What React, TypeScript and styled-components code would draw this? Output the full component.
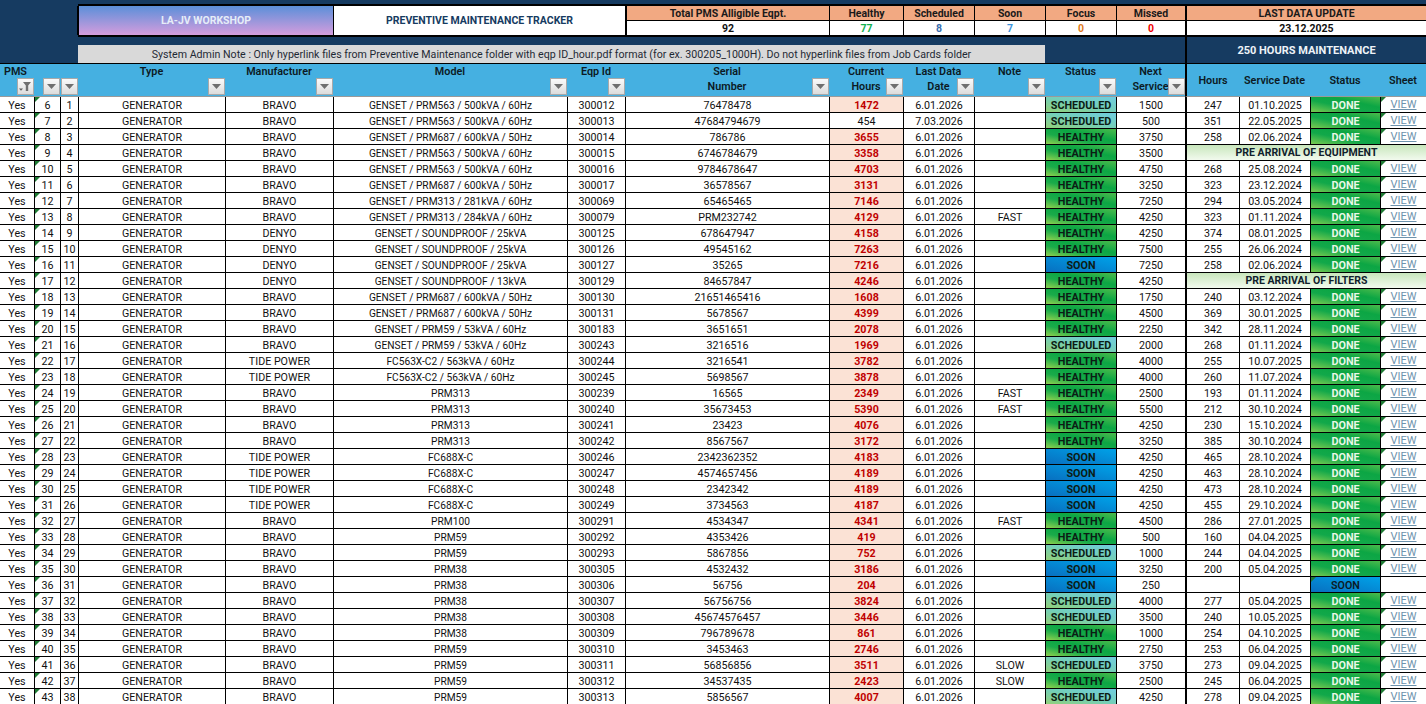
import React from "react";
import styled, { createGlobalStyle, css } from "styled-components";

const COLUMNS = "34px 26px 18px 147px 108px 234px 58px 204px 74px 71px 71px 71px 69px 54px 71px 70px 46px";

const Global = createGlobalStyle`
  html, body { margin: 0; padding: 0; height: 100%; overflow: hidden; background: #163b61; }
  #root { height: 704px; overflow: hidden; }
`;

const Page = styled.div`
  width: 1426px;
  height: 704px;
  overflow: hidden;
  background: #163b61;
  font-family: Roboto, "Liberation Sans", sans-serif;
  font-size: 10.7px;
  color: #111;
`;

const Banner = styled.div`
  display: grid;
  grid-template-columns: ${COLUMNS};
  grid-template-rows: 4px 2px 15px 14px 2px 8px 18px 1px;
`;

const Table = styled.div`
  display: grid;
  grid-template-columns: ${COLUMNS};
  grid-template-rows: 33px;
  grid-auto-rows: 16px;
`;

const Rule = styled.div<{ $row: number; $col: string }>`
  grid-column: ${(p) => p.$col};
  grid-row: ${(p) => p.$row};
  background: #000;
`;

const BannerCell = styled.div<{ $col: string; $row: string }>`
  grid-column: ${(p) => p.$col};
  grid-row: ${(p) => p.$row};
  display: flex;
  align-items: center;
  justify-content: center;
  font-weight: 700;
  font-size: 10.5px;
  white-space: nowrap;
  box-sizing: border-box;
`;

const Workshop = styled(BannerCell)`
  background: linear-gradient(#5b8fd9, #d59ddd);
  color: #e6edf8;
  border-left: 2px solid #000;
  margin-left: -1px;
`;

const Tracker = styled(BannerCell)`
  background: #fff;
  color: #163b61;
  border-left: 1px solid #000;
`;

const KpiHead = styled(BannerCell)<{ $edge?: boolean }>`
  background: #f2a982;
  border-bottom: 1px solid #000;
  border-left: ${(p) => (p.$edge ? 2 : 1)}px solid #000;
  color: #1a1a1a;
`;

const KpiValue = styled(BannerCell)<{ $color?: string; $edge?: boolean }>`
  background: #fff;
  border-left: ${(p) => (p.$edge ? 2 : 1)}px solid #000;
  color: ${(p) => p.$color ?? "#111"};
`;

const Note = styled(BannerCell)`
  background: #d9d9d9;
  color: #1f2a35;
  font-weight: 400;
  font-size: 10.63px;
`;

const HoursBanner = styled(BannerCell)`
  background: #163b61;
  border-left: 2px solid #000;
  color: #eef3f8;
  font-size: 11px;
`;

const HeadCell = styled.div<{ $centered?: boolean }>`
  position: relative;
  background: #45b0e1;
  color: #0c1a24;
  font-weight: 600;
  font-size: 10.8px;
  line-height: 15px;
  text-align: center;
  box-sizing: border-box;
  white-space: nowrap;
  border-bottom: 1px solid #9a9a9a;
  ${(p) =>
    p.$centered &&
    css`
      display: flex;
      align-items: center;
      justify-content: center;
    `}
`;

const SideLeft = styled(HeadCell)`
  border-left: 2px solid #000;
`;

const PmsLabel = styled.span`
  position: absolute;
  left: 4px;
  top: 0;
`;

const FilterBtn = styled.span`
  position: absolute;
  right: 0;
  bottom: 1px;
  width: 17px;
  height: 17px;
  box-sizing: border-box;
  background: linear-gradient(#fafafa, #dcdcdc);
  border: 1px solid #a9a9a9;
  display: flex;
  align-items: center;
  justify-content: center;
`;

const Cell = styled.div<{ $first?: boolean }>`
  position: relative;
  background: #fff;
  box-sizing: border-box;
  padding-top: 2px;
  border-bottom: 1px solid #000;
  border-left: ${(p) => (p.$first ? 0 : 1)}px solid #000;
  display: flex;
  align-items: center;
  justify-content: center;
  white-space: nowrap;
  overflow: hidden;
  line-height: 13px;
`;

const ModelCell = styled(Cell)`
  font-size: 10.2px;
`;

const SideCell = styled(Cell)`
  border-left-width: 2px;
`;

const Tick = styled.i`
  position: absolute;
  left: 0;
  top: 0;
  width: 0;
  height: 0;
  border-top: 5px solid #1e7b34;
  border-right: 5px solid transparent;
`;

const HoursCell = styled(Cell)<{ $hot: boolean }>`
  ${(p) =>
    p.$hot &&
    css`
      background: #fbe2d5;
      color: #c00000;
      font-weight: 700;
    `}
`;

const STATUS = {
  H: { label: "HEALTHY", bg: "linear-gradient(to top right, #8fd14f 0%, #1aab4a 35%, #0ca644 60%, #4dbb4c 100%)" },
  S: { label: "SCHEDULED", bg: "linear-gradient(to top right, #92d07a 0%, #74cfb8 50%, #70cde0 100%)" },
  O: { label: "SOON", bg: "linear-gradient(to top right, #0870c0 0%, #00a2e8 100%)" },
} as const;

const StatusCell = styled(Cell)<{ $bg: string }>`
  background: ${(p) => p.$bg};
  font-weight: 700;
  font-size: 10.8px;
  color: #0c1c14;
`;

const DoneCell = styled(Cell)`
  background: linear-gradient(to top right, #7acb50 0%, #12a84a 40%, #0ca644 65%, #4dbb4c 100%);
  color: #eaf7e6;
  font-weight: 700;
  font-size: 10.8px;
`;

const SoonCell = styled(Cell)`
  background: linear-gradient(to top right, #0870c0 0%, #00a2e8 100%);
  color: #0c1a24;
  font-weight: 600;
`;

const Wide = styled(Cell)`
  grid-column: 14 / 18;
  background: linear-gradient(#c8e6bc, #f2faee);
  font-weight: 700;
  font-size: 10.5px;
  border-left-width: 2px;
  padding-top: 0;
  color: #10202c;
`;

const ViewLink = styled.a`
  color: #6d93ad;
  text-decoration: underline;
  font-size: 11px;
  position: relative;
  top: -1px;
`;

const FilterIcon = ({ active }: { active?: boolean }) =>
  active ? (
    <svg width="13" height="11" viewBox="0 0 13 11">
      <path d="M4 1h8L9.2 4.5V10H6.8V4.5z" fill="#6f6f6f" />
      <path d="M0 7.5h4L2 9.8z" fill="#5f5f5f" />
    </svg>
  ) : (
    <svg width="9" height="5" viewBox="0 0 9 5">
      <path d="M0 0h9L4.5 5z" fill="#6f6f6f" />
    </svg>
  );

const G1 = "GENSET / PRM563 / 500kVA / 60Hz";
const G2 = "GENSET / PRM687 / 600kVA / 50Hz";
const SP = "GENSET / SOUNDPROOF / 25kVA";
const FC = "FC563X-C2 / 563kVA / 60Hz";

const rows: [string, string, string, string, string, string, keyof typeof STATUS, string][] = [
  ["BRAVO", G1, "300012", "76478478", "1472", "", "S", "1500"],
  ["BRAVO", G1, "300013", "47684794679", "454", "", "S", "500"],
  ["BRAVO", G2, "300014", "786786", "3655", "", "H", "3750"],
  ["BRAVO", G1, "300015", "6746784679", "3358", "", "H", "3500"],
  ["BRAVO", G1, "300016", "9784678647", "4703", "", "H", "4750"],
  ["BRAVO", G2, "300017", "36578567", "3131", "", "H", "3250"],
  ["BRAVO", "GENSET / PRM313 / 281kVA / 60Hz", "300069", "65465465", "7146", "", "H", "7250"],
  ["BRAVO", "GENSET / PRM313 / 284kVA / 60Hz", "300079", "PRM232742", "4129", "FAST", "H", "4250"],
  ["DENYO", SP, "300125", "678647947", "4158", "", "H", "4250"],
  ["DENYO", SP, "300126", "49545162", "7263", "", "H", "7500"],
  ["DENYO", SP, "300127", "35265", "7216", "", "O", "7250"],
  ["DENYO", "GENSET / SOUNDPROOF / 13kVA", "300129", "84657847", "4246", "", "H", "4250"],
  ["BRAVO", G2, "300130", "21651465416", "1608", "", "H", "1750"],
  ["BRAVO", G2, "300131", "5678567", "4399", "", "H", "4500"],
  ["BRAVO", "GENSET / PRM59 / 53kVA / 60Hz", "300183", "3651651", "2078", "", "H", "2250"],
  ["BRAVO", "GENSET / PRM59 / 53kVA / 60Hz", "300243", "3216516", "1969", "", "S", "2000"],
  ["TIDE POWER", FC, "300244", "3216541", "3782", "", "H", "4000"],
  ["TIDE POWER", FC, "300245", "5698567", "3878", "", "H", "4000"],
  ["BRAVO", "PRM313", "300239", "16565", "2349", "FAST", "H", "2500"],
  ["BRAVO", "PRM313", "300240", "35673453", "5390", "FAST", "H", "5500"],
  ["BRAVO", "PRM313", "300241", "23423", "4076", "", "H", "4250"],
  ["BRAVO", "PRM313", "300242", "8567567", "3172", "", "H", "3250"],
  ["TIDE POWER", "FC688X-C", "300246", "2342362352", "4183", "", "O", "4250"],
  ["TIDE POWER", "FC688X-C", "300247", "4574657456", "4189", "", "O", "4250"],
  ["TIDE POWER", "FC688X-C", "300248", "2342342", "4189", "", "O", "4250"],
  ["TIDE POWER", "FC688X-C", "300249", "3734563", "4187", "", "O", "4250"],
  ["BRAVO", "PRM100", "300291", "4534347", "4341", "FAST", "H", "4500"],
  ["BRAVO", "PRM59", "300292", "4353426", "419", "", "H", "500"],
  ["BRAVO", "PRM59", "300293", "5867856", "752", "", "S", "1000"],
  ["BRAVO", "PRM38", "300305", "4532432", "3186", "", "O", "3250"],
  ["BRAVO", "PRM38", "300306", "56756", "204", "", "O", "250"],
  ["BRAVO", "PRM38", "300307", "56756756", "3824", "", "S", "4000"],
  ["BRAVO", "PRM38", "300308", "45674576457", "3446", "", "S", "3500"],
  ["BRAVO", "PRM38", "300309", "796789678", "861", "", "H", "1000"],
  ["BRAVO", "PRM59", "300310", "3453463", "2746", "", "H", "2750"],
  ["BRAVO", "PRM59", "300311", "56856856", "3511", "SLOW", "S", "3750"],
  ["BRAVO", "PRM59", "300312", "34537435", "2423", "SLOW", "H", "2500"],
  ["BRAVO", "PRM59", "300313", "5856567", "4007", "", "S", "4250"],
];

type Side = { kind: "done"; h: string; d: string } | { kind: "wide"; t: string } | { kind: "soon" };
const D = (h: string, d: string): Side => ({ kind: "done", h, d });
const side: Side[] = [
  D("247", "01.10.2025"), D("351", "22.05.2025"), D("258", "02.06.2024"),
  { kind: "wide", t: "PRE ARRIVAL OF EQUIPMENT" },
  D("268", "25.08.2024"), D("323", "23.12.2024"), D("294", "03.05.2024"), D("323", "01.11.2024"),
  D("374", "08.01.2025"), D("255", "26.06.2024"), D("258", "02.06.2024"),
  { kind: "wide", t: "PRE ARRIVAL OF FILTERS" },
  D("240", "03.12.2024"), D("369", "30.01.2025"), D("342", "28.11.2024"), D("268", "01.11.2024"),
  D("255", "10.07.2025"), D("260", "11.07.2024"), D("193", "01.11.2024"), D("212", "30.10.2024"),
  D("230", "15.10.2024"), D("385", "30.10.2024"), D("465", "28.10.2024"), D("463", "28.10.2024"),
  D("473", "28.10.2024"), D("455", "29.10.2024"), D("286", "27.01.2025"), D("160", "04.04.2025"),
  D("244", "04.04.2025"), D("200", "05.04.2025"),
  { kind: "soon" },
  D("277", "05.04.2025"), D("240", "10.05.2025"), D("254", "04.10.2025"), D("253", "06.04.2025"),
  D("273", "09.04.2025"), D("245", "06.04.2025"), D("278", "09.04.2025"),
];

const kpis: { c: string; label: string; value: string; color: string; edge?: boolean }[] = [
  { c: "8 / 9", label: "Total PMS Alligible Eqpt.", value: "92", color: "#111", edge: true },
  { c: "9 / 10", label: "Healthy", value: "77", color: "#12b04e" },
  { c: "10 / 11", label: "Scheduled", value: "8", color: "#3a6fb0" },
  { c: "11 / 12", label: "Soon", value: "7", color: "#3b94dc" },
  { c: "12 / 13", label: "Focus", value: "0", color: "#e07a1a" },
  { c: "13 / 14", label: "Missed", value: "0", color: "#f00000" },
];

const Head = ({ title, second }: { title: string; second?: string }) => (
  <HeadCell>
    {title}
    {second && <br />}
    {second}
    <FilterBtn>
      <FilterIcon />
    </FilterBtn>
  </HeadCell>
);

export default function App() {
  return (
    <Page>
      <Global />
      <Banner>
        <Rule $col="4 / 18" $row={2} />
        <Workshop $col="4 / 6" $row="3 / 5">LA-JV WORKSHOP</Workshop>
        <Tracker $col="6 / 8" $row="3 / 5">PREVENTIVE MAINTENANCE TRACKER</Tracker>
        {kpis.map((k) => (
          <React.Fragment key={k.label}>
            <KpiHead $col={k.c} $row="3" $edge={k.edge}>{k.label}</KpiHead>
            <KpiValue $col={k.c} $row="4" $edge={k.edge} $color={k.color}>{k.value}</KpiValue>
          </React.Fragment>
        ))}
        <KpiHead $col="14 / 18" $row="3" $edge>LAST DATA UPDATE</KpiHead>
        <KpiValue $col="14 / 18" $row="4" $edge>23.12.2025</KpiValue>
        <Rule $col="4 / 18" $row={5} />
        <Note $col="4 / 12" $row="7">
          System Admin Note : Only hyperlink files from Preventive Maintenance folder with eqp ID_hour.pdf format (for ex. 300205_1000H). Do not hyperlink files from Job Cards folder
        </Note>
        <HoursBanner $col="14 / 18" $row="6 / 8">250 HOURS MAINTENANCE</HoursBanner>
        <Rule $col="1 / 18" $row={8} />
      </Banner>

      <Table>
        <HeadCell>
          <PmsLabel>PMS</PmsLabel>
          <FilterBtn><FilterIcon active /></FilterBtn>
        </HeadCell>
        <HeadCell><FilterBtn><FilterIcon /></FilterBtn></HeadCell>
        <HeadCell><FilterBtn><FilterIcon /></FilterBtn></HeadCell>
        <Head title="Type" />
        <Head title="Manufacturer" />
        <Head title="Model" />
        <Head title="Eqp Id" />
        <Head title="Serial" second="Number" />
        <Head title="Current" second="Hours" />
        <Head title="Last Data" second="Date" />
        <Head title="Note" />
        <Head title="Status" />
        <Head title="Next" second="Service" />
        <SideLeft $centered>Hours</SideLeft>
        <HeadCell $centered>Service Date</HeadCell>
        <HeadCell $centered>Status</HeadCell>
        <HeadCell $centered>Sheet</HeadCell>

        {rows.map((r, i) => {
          const [maker, model, id, serial, hours, note, st, next] = r;
          const s = side[i];
          const date = i === 1 ? "7.03.2026" : "6.01.2026";
          return (
            <React.Fragment key={id}>
              <Cell $first>Yes</Cell>
              <Cell><Tick />{i + 6}</Cell>
              <Cell>{i + 1}</Cell>
              <Cell>GENERATOR</Cell>
              <Cell>{maker}</Cell>
              <ModelCell>{model}</ModelCell>
              <Cell>{id}</Cell>
              <Cell>{serial}</Cell>
              <HoursCell $hot={hours !== "454"}>{hours}</HoursCell>
              <Cell>{date}</Cell>
              <Cell>{note}</Cell>
              <StatusCell $bg={STATUS[st].bg}>{STATUS[st].label}</StatusCell>
              <Cell>{next}</Cell>
              {s.kind === "wide" ? (
                <Wide>{s.t}</Wide>
              ) : s.kind === "soon" ? (
                <>
                  <SideCell />
                  <Cell />
                  <SoonCell><Tick />SOON</SoonCell>
                  <Cell />
                </>
              ) : (
                <>
                  <SideCell>{s.h}</SideCell>
                  <Cell>{s.d}</Cell>
                  <DoneCell>DONE</DoneCell>
                  <Cell><Tick /><ViewLink href="#">VIEW</ViewLink></Cell>
                </>
              )}
            </React.Fragment>
          );
        })}
      </Table>
    </Page>
  );
}
